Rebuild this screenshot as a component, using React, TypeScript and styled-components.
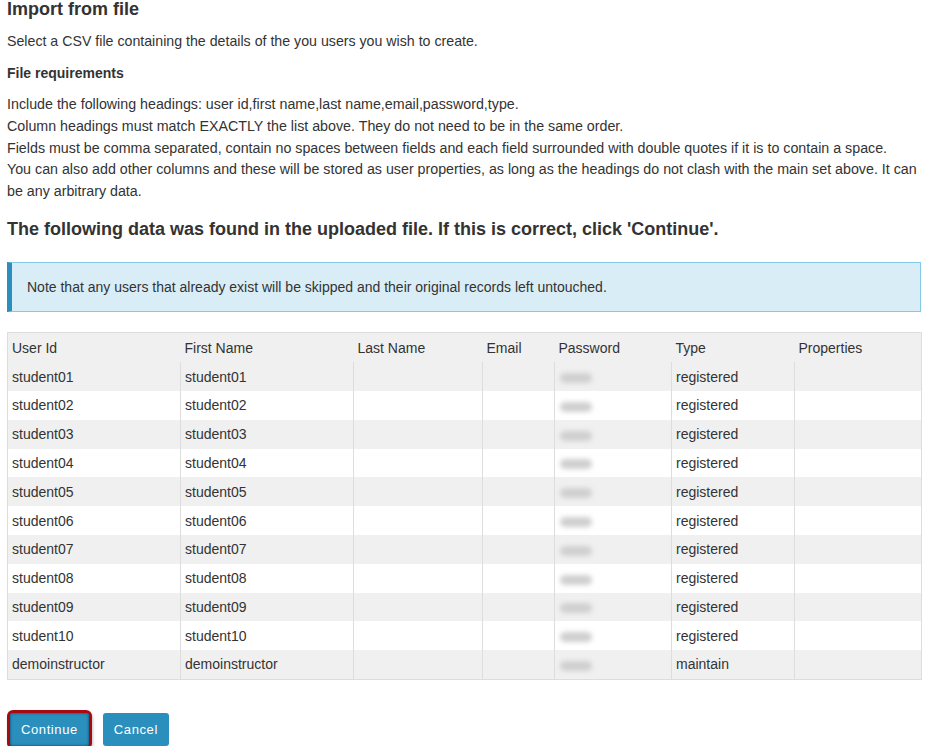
import React from "react";
import styled, { createGlobalStyle } from "styled-components";

const Global = createGlobalStyle`
  html, body { margin: 0; padding: 0; background: #fff; }
  body { font-family: "Liberation Sans", Arial, sans-serif; color: #333; font-size: 14px; }
`;

const Page = styled.div`
  padding: 0 16px 0 7px;
  width: 914px;
`;

const Title = styled.h3`
  margin: 0;
  font-size: 18px;
  line-height: 18px;
  font-weight: bold;
  color: #333;
`;

const Para = styled.p<{ $top: number }>`
  margin: ${(p) => p.$top}px 0 0;
  line-height: 20px;
  font-size: 14.2px;
`;

const SubHead = styled.h4`
  margin: 12px 0 0;
  font-size: 14px;
  line-height: 20px;
  font-weight: bold;
`;

const Requirements = styled.div`
  margin-top: 11px;
  line-height: 21.75px;
  font-size: 14.25px;
`;

const Heading = styled.h2`
  margin: 14px 0 0;
  font-size: 18px;
  line-height: 24px;
  font-weight: bold;
  color: #333;
`;

const Info = styled.div`
  margin-top: 21px;
  box-sizing: border-box;
  height: 50px;
  background: #d9edf7;
  border: 1px solid #85c9e8;
  border-left: 5px solid #2a8fbd;
  padding: 0 15px;
  display: flex;
  align-items: center;
  font-size: 14px;
`;

const Table = styled.table`
  margin-top: 20px;
  width: 914px;
  border-collapse: collapse;
  table-layout: fixed;
  border: 1px solid #ddd;
  font-size: 14px;
`;

const Th = styled.th`
  text-align: left;
  font-weight: normal;
  padding: 0 4px;
  height: 30px;
  background: #f0f0f0;
  box-sizing: border-box;
`;

const Row = styled.tr<{ $odd: boolean }>`
  height: 28.8px;
  background: ${(p) => (p.$odd ? "#f0f0f0" : "#fff")};
`;

const Td = styled.td`
  padding: 0 4px;
  border-left: 1px solid #ddd;
  white-space: nowrap;
  &:first-child { border-left: none; }
`;

const Blur = styled.span`
  display: inline-block;
  width: 32px;
  height: 10px;
  margin-left: 1px;
  background: #cfcfcf;
  border-radius: 5px;
  filter: blur(2.5px);
  vertical-align: middle;
`;

const Buttons = styled.div`
  margin-top: 33px;
  padding-left: 3px;
  display: flex;
  align-items: center;
  gap: 14px;
`;

const Button = styled.button<{ $focus?: boolean }>`
  font-family: "Liberation Sans", Arial, sans-serif;
  font-size: 13px;
  letter-spacing: 0.6px;
  color: #fff;
  background: #2a8fbd;
  border: none;
  border-radius: 3px;
  height: 33px;
  padding: 0 11px;
  cursor: pointer;
  box-shadow: ${(p) =>
    p.$focus ? "inset 0 0 2px 1px #1b6a8f, 0 0 0 3px #a70b11, 1px 2px 3px 3px rgba(0,0,0,0.25)" : "none"};
`;

const cols = [173, 173, 129, 72, 117, 123, 127];
const headers = ["User Id", "First Name", "Last Name", "Email", "Password", "Type", "Properties"];

const users = [
  ...Array.from({ length: 10 }, (_, i) => ({
    id: `student${String(i + 1).padStart(2, "0")}`,
    type: "registered",
  })),
  { id: "demoinstructor", type: "maintain" },
];

export default function App() {
  return (
    <>
      <Global />
      <Page>
        <Title>Import from file</Title>
        <Para $top={13}>Select a CSV file containing the details of the you users you wish to create.</Para>
        <SubHead>File requirements</SubHead>
        <Requirements>
          Include the following headings: user id,first name,last name,email,password,type.
          <br />
          Column headings must match EXACTLY the list above. They do not need to be in the same order.
          <br />
          Fields must be comma separated, contain no spaces between fields and each field surrounded with double quotes if it is to contain a space.
          <br />
          You can also add other columns and these will be stored as user properties, as long as the headings do not clash with the main set above. It can be any arbitrary data.
        </Requirements>
        <Heading>The following data was found in the uploaded file. If this is correct, click 'Continue'.</Heading>
        <Info>Note that any users that already exist will be skipped and their original records left untouched.</Info>
        <Table>
          <colgroup>
            {cols.map((w, i) => (
              <col key={i} style={{ width: w }} />
            ))}
          </colgroup>
          <thead>
            <tr>
              {headers.map((h) => (
                <Th key={h}>{h}</Th>
              ))}
            </tr>
          </thead>
          <tbody>
            {users.map((u, i) => (
              <Row key={u.id} $odd={i % 2 === 0}>
                <Td>{u.id}</Td>
                <Td>{u.id}</Td>
                <Td />
                <Td />
                <Td>
                  <Blur />
                </Td>
                <Td>{u.type}</Td>
                <Td />
              </Row>
            ))}
          </tbody>
        </Table>
        <Buttons>
          <Button $focus>Continue</Button>
          <Button>Cancel</Button>
        </Buttons>
      </Page>
    </>
  );
}
